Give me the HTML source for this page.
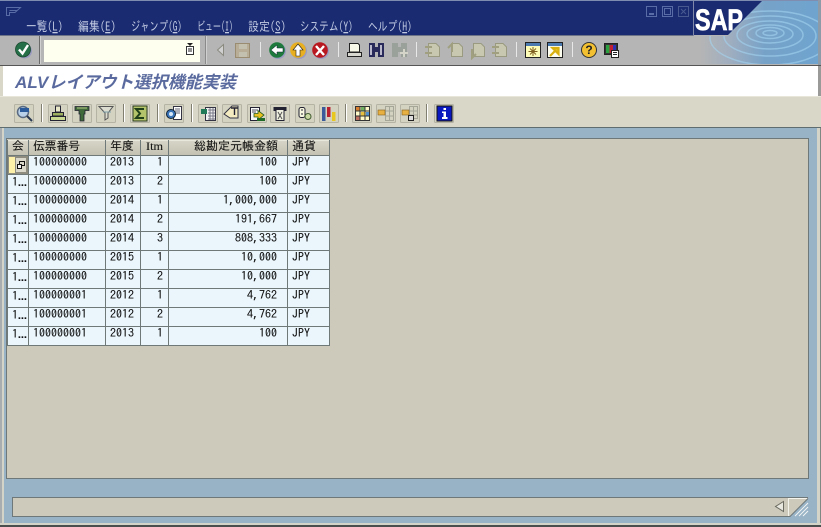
<!DOCTYPE html>
<html lang="ja"><head><meta charset="utf-8"><title>ALVレイアウト選択機能実装</title>
<style>
html,body{margin:0;padding:0;background:#98b3c6;width:821px;height:527px;overflow:hidden}
svg{display:block}
.m{font:13px "IPAGothic","Noto Sans CJK JP",sans-serif;fill:#c2cbe2}
.c{font:12px "IPAGothic","Noto Sans CJK JP",monospace;fill:#111;stroke:#111;stroke-width:.08}
.h{font:12px "IPAGothic","Noto Sans CJK JP",monospace;fill:#111;stroke:#111;stroke-width:.08}
.t{font:italic bold 17px "Liberation Sans","Noto Sans CJK JP",sans-serif;fill:#5a6a9e}
.r{text-anchor:end}
</style></head><body>
<svg width="821" height="527" viewBox="0 0 821 527" xmlns="http://www.w3.org/2000/svg">
<defs>
<linearGradient id="fade" x1="0" x2="1" y1="0" y2="0"><stop offset="0" stop-color="#b5b5b5"/><stop offset=".25" stop-color="#a0aebf"/><stop offset=".55" stop-color="#76a2c8"/><stop offset="1" stop-color="#6fa4cf"/></linearGradient>
<linearGradient id="hd" x1="0" x2="0" y1="0" y2="1"><stop offset="0" stop-color="#d8d6c8"/><stop offset="1" stop-color="#c4c2b2"/></linearGradient>
<clipPath id="logo"><path d="M762 1H818V64H700V36H728Z"/></clipPath>
</defs>
<!-- frame -->
<rect width="821" height="527" fill="#98b3c6"/>
<rect x="0" y="0" width="821" height="1" fill="#7f8db0"/>
<rect x="0" y="1" width="693" height="34" fill="#1a2b72"/>
<rect x="0" y="35" width="821" height="30" fill="#b5b5b5"/>
<rect x="0" y="35" width="693" height="1" fill="#6d7488"/>
<!-- logo area -->
<rect x="700" y="1" width="118" height="63" fill="url(#fade)" clip-path="url(#logo)"/>
<g clip-path="url(#logo)" fill="none" stroke="#a4d4f0" stroke-width="1.500" opacity=".6">
<ellipse cx="770" cy="33" rx="7" ry="2.500"/>
<ellipse cx="770" cy="33" rx="14" ry="5.500"/>
<ellipse cx="770" cy="34" rx="23" ry="9"/>
<ellipse cx="770" cy="35" rx="33" ry="14"/>
<ellipse cx="770" cy="36" rx="46" ry="20"/>
<ellipse cx="770" cy="38" rx="60" ry="27"/>
</g>
<path d="M693 1H762L728 35H693Z" fill="#1a2b72"/>
<rect x="693" y="1" width="1" height="35" fill="#7f88a8"/>
<text x="695" y="30" textLength="48" lengthAdjust="spacingAndGlyphs" style="font:bold 30px 'Liberation Sans',sans-serif;fill:#fff;stroke:#fff;stroke-width:.7">SAP</text>
<rect x="818" y="0" width="3" height="65" fill="#8d9aa8"/>
<!-- title bar -->
<g fill="none" stroke="#5a6ca5" stroke-width="1">
<path d="M6.500 7.500H20.500L15 12.500H9.500V15.500H6.500Z"/><path d="M9.500 10.500H17"/>
<rect x="646.500" y="6.500" width="10" height="10"/><path d="M649 14H654" stroke-width="2"/>
<rect x="662.500" y="6.500" width="10" height="10"/><rect x="664.500" y="8.500" width="6" height="6"/>
<rect x="678.500" y="6.500" width="10" height="10" stroke="#48598f"/><path d="M681 9L686 14M686 9L681 14" stroke="#48598f"/>
</g>
<text class="m" x="26" y="31" textLength="37" lengthAdjust="spacingAndGlyphs">一覧(<tspan text-decoration="underline">L</tspan>)</text>
<text class="m" x="78" y="31" textLength="38" lengthAdjust="spacingAndGlyphs">編集(<tspan text-decoration="underline">E</tspan>)</text>
<text class="m" x="131" y="31" textLength="51" lengthAdjust="spacingAndGlyphs">ジャンプ(<tspan text-decoration="underline">G</tspan>)</text>
<text class="m" x="197" y="31" textLength="36" lengthAdjust="spacingAndGlyphs">ビュー(<tspan text-decoration="underline">I</tspan>)</text>
<text class="m" x="248" y="31" textLength="38" lengthAdjust="spacingAndGlyphs">設定(<tspan text-decoration="underline">S</tspan>)</text>
<text class="m" x="300" y="31" textLength="53" lengthAdjust="spacingAndGlyphs">システム(<tspan text-decoration="underline">Y</tspan>)</text>
<text class="m" x="368" y="31" textLength="44" lengthAdjust="spacingAndGlyphs">ヘルプ(<tspan text-decoration="underline">H</tspan>)</text>
<!-- system toolbar -->
<rect x="39" y="36" width="1" height="28" fill="#6a6a6a"/><rect x="40" y="36" width="1" height="28" fill="#d0d0d0"/>
<rect x="205" y="36" width="1" height="28" fill="#8a8a8a"/><rect x="206" y="36" width="1" height="28" fill="#d0d0d0"/>
<rect x="44" y="40" width="156" height="22" fill="#fffff0"/>
<g fill="#fff" stroke="#333"><rect x="186.500" y="46.500" width="7" height="8"/></g>
<path d="M187 43H193L190 46Z" fill="#222"/><path d="M188 49H192M188 51H192" stroke="#222"/>
<circle cx="24.500" cy="51" r="7.500" fill="#9a9ac0"/><circle cx="23" cy="49.500" r="7.500" fill="#256f48" stroke="#1a4a30" stroke-width=".8"/>
<path d="M19 49.500L22.500 53.500L28 45" fill="none" stroke="#fff" stroke-width="2.400"/>
<path d="M223.500 44.500V55.500L217.500 50Z" fill="#d0d0d0" stroke="#8a8a80"/>
<rect x="235.500" y="43.500" width="14" height="14" fill="#b8ae98" stroke="#9a8c70"/><rect x="239" y="44" width="8" height="5" fill="#c4c0b0"/><rect x="239" y="52" width="8" height="5" fill="#c4c0b0"/>
<g fill="#e8e8e8"><rect x="260" y="42" width="1" height="15"/><rect x="338" y="42" width="1" height="15"/><rect x="416" y="42" width="1" height="15"/><rect x="516" y="42" width="1" height="15"/><rect x="572" y="42" width="1" height="15"/></g>
<circle cx="278" cy="51" r="8" fill="#9a9ac0"/><circle cx="277" cy="50" r="7.800" fill="#1d7a3c"/>
<path d="M271 50L277 45V48H283V52H277V55Z" fill="#fff" stroke="#123" stroke-width=".5"/>
<circle cx="299" cy="51" r="8" fill="#9a9ac0"/><circle cx="298" cy="50" r="7.800" fill="#e8b020"/>
<path d="M298 44L303 50H300V56H296V50H293Z" fill="#fff" stroke="#222" stroke-width=".6"/>
<circle cx="321" cy="51" r="8" fill="#9a9ac0"/><circle cx="320" cy="50" r="7.800" fill="#b81820"/>
<path d="M316 46L324 55M324 46L316 55" stroke="#fff" stroke-width="2.400"/>
<path d="M349.500 43.500H358L359.500 45V52H349.500Z" fill="#f8f8e8" stroke="#222"/><path d="M347.500 52.500H361.500V56.500H347.500Z" fill="#d8d8d0" stroke="#222"/>
<path d="M369 43H375V47H378V43H384V57H378V52H375V57H369Z" fill="#2a2a5a"/><path d="M371 45V55M381 45V55" stroke="#e8e8f0" stroke-width="1.500"/>
<path d="M392 43H398V47H401V43H407V57H401V52H398V57H392Z" fill="#9aa09a"/><path d="M400 53H408M404 49V57" stroke="#d4d4c8" stroke-width="2"/>
<g fill="none" stroke="#9a9a80" stroke-width="1">
<path d="M428.500 43.500H436L439.500 47V56.500H428.500Z" fill="#c8c8b0"/><path d="M425 47H432M425 53H432" stroke-width="2" stroke="#a0a080"/>
<path d="M451.500 43.500H459L462.500 47V56.500H451.500Z" fill="#c8c8b0"/><path d="M452 52V44L448 48" stroke-width="2" stroke="#a0a080"/>
<path d="M473.500 43.500H481L484.500 47V56.500H473.500Z" fill="#c8c8b0"/><path d="M472 49V58L476 54" stroke-width="2" stroke="#a0a080"/>
<path d="M495.500 43.500H503L506.500 47V56.500H495.500Z" fill="#c8c8b0"/><path d="M492 47H499M492 53H499" stroke-width="2" stroke="#a0a080"/>
</g>
<rect x="525.500" y="42.500" width="15" height="15" fill="#fdfdb8" stroke="#222"/><rect x="526" y="43" width="14" height="3" fill="#4a7ab0"/>
<path d="M533 47V56M528.500 51.500H537.500M530 48.500L536 54.500M536 48.500L530 54.500" stroke="#806020"/>
<rect x="547.500" y="42.500" width="15" height="15" fill="#fdfdf0" stroke="#222"/><rect x="548" y="43" width="14" height="3" fill="#4a7ab0"/>
<path d="M550 56L556 50M552.500 48H558.500V54Z" stroke="#d8b010" stroke-width="2.200" fill="#e8c020"/>
<circle cx="589" cy="50" r="7.500" fill="#f2c030" stroke="#333"/>
<text x="589" y="54" text-anchor="middle" style="font:bold 12px 'Liberation Sans',sans-serif;fill:#222">?</text>
<rect x="604.500" y="43.500" width="13" height="11" fill="#333" stroke="#222"/><rect x="606" y="45" width="3.500" height="8" fill="#2aa040"/><rect x="609.500" y="45" width="3.500" height="8" fill="#c02030"/><rect x="613" y="45" width="3" height="8" fill="#3030b0"/>
<rect x="611.500" y="50.500" width="7" height="7" fill="#fff" stroke="#222"/><path d="M613 52.500H617M613 54.500H617" stroke="#222"/>
<!-- separation & title -->
<rect x="0" y="65" width="821" height="1" fill="#555"/>
<rect x="0" y="66" width="821" height="31" fill="#fff"/>
<rect x="0" y="66" width="3" height="31" fill="#d9d8c8"/>
<rect x="818" y="66" width="3" height="31" fill="#9a9a98"/>
<text class="t" x="15" y="88" textLength="221" lengthAdjust="spacingAndGlyphs">ALVレイアウト選択機能実装</text>
<!-- app toolbar -->
<rect x="0" y="97" width="821" height="30" fill="#d9d8c8"/>
<rect x="0" y="96" width="821" height="1" fill="#e8e6d8"/>
<rect x="0" y="127" width="821" height="1" fill="#5f6c70"/>
<g fill="#d4d3c2" stroke="#b4b3a4">
<rect x="14.500" y="104.500" width="19" height="18" rx="1"/>
<rect x="48.500" y="104.500" width="19" height="18" rx="1"/><rect x="72.500" y="104.500" width="19" height="18" rx="1"/><rect x="96.500" y="104.500" width="19" height="18" rx="1"/>
<rect x="130.500" y="104.500" width="19" height="18" rx="1"/><rect x="164.500" y="104.500" width="19" height="18" rx="1"/>
<rect x="198.500" y="104.500" width="19" height="18" rx="1"/><rect x="222.500" y="104.500" width="19" height="18" rx="1"/><rect x="247.500" y="104.500" width="19" height="18" rx="1"/><rect x="270.500" y="104.500" width="19" height="18" rx="1"/><rect x="295.500" y="104.500" width="19" height="18" rx="1"/><rect x="319.500" y="104.500" width="19" height="18" rx="1"/>
<rect x="352.500" y="104.500" width="19" height="18" rx="1"/><rect x="376.500" y="104.500" width="19" height="18" rx="1"/><rect x="400.500" y="104.500" width="19" height="18" rx="1"/>
<rect x="434.500" y="104.500" width="19" height="18" rx="1"/>
</g>
<g fill="#807f70"><rect x="41" y="104" width="1" height="18"/><rect x="123" y="104" width="1" height="18"/><rect x="157" y="104" width="1" height="18"/><rect x="191" y="104" width="1" height="18"/><rect x="345" y="104" width="1" height="18"/><rect x="426" y="104" width="1" height="18"/></g>
<g fill="#fff"><rect x="42" y="104" width="1" height="18"/><rect x="124" y="104" width="1" height="18"/><rect x="158" y="104" width="1" height="18"/><rect x="192" y="104" width="1" height="18"/><rect x="346" y="104" width="1" height="18"/><rect x="427" y="104" width="1" height="18"/></g>
<!-- app icons -->
<circle cx="23" cy="112" r="5.500" fill="#b8d0e8" stroke="#5a6a80" stroke-width="1.500"/><rect x="20" y="108" width="9" height="4" fill="#2a5a9a"/><path d="M27 116L32 121" stroke="#2a3a50" stroke-width="2"/>
<path d="M55.500 106H60.500V112H55.500Z" fill="#e8e8c8" stroke="#223"/><rect x="52.500" y="112.500" width="11" height="3.500" fill="#9db060" stroke="#223"/><rect x="50.500" y="116.500" width="15" height="4" fill="#c8d890" stroke="#223"/>
<path d="M75 106.500H89V110.500H85V114H84V121H80V114H79V110.500H75Z" fill="#406a3a" stroke="#223" stroke-width=".8"/><path d="M77 108H87" stroke="#b8c888"/>
<path d="M99 106.500H113L108 113V118L105 120V113Z" fill="#dcdcd0" stroke="#555"/><path d="M103 112H111" stroke="#80a0a8"/>
<rect x="133" y="106" width="14" height="15" fill="#b4c46a" stroke="#2a3a20"/><path d="M144 109H136L140 113.500L136 118H144" fill="none" stroke="#20401a" stroke-width="2"/>
<rect x="173.500" y="106.500" width="8" height="13" fill="#fff" stroke="#334"/><path d="M175 109H180M175 111H180M175 113H180" stroke="#667"/><circle cx="171" cy="114" r="4.500" fill="#3a74b8" stroke="#123"/><circle cx="171" cy="114" r="2" fill="#d8e8f8"/>
<rect x="205.500" y="107.500" width="10" height="13" fill="#f0f0f0" stroke="#334"/><path d="M208 110H215M208 113H215M208 116H215M208 119H215M210 108V120M213 108V120" stroke="#778"/><rect x="201" y="109" width="6" height="5" fill="#207a58"/>
<path d="M224 114L232 106H238V118H230Z" fill="#f4ecc0" stroke="#334"/><path d="M231 108H238M234.500 108V115" stroke="#223" stroke-width="1.400"/>
<rect x="250.500" y="107.500" width="9" height="13" fill="#f8f8f8" stroke="#223"/><path d="M252 110H258M252 112H256" stroke="#556"/><path d="M254 113.500H258V110.500L264 115L258 120V117H254Z" fill="#e8c020" stroke="#205a20" stroke-width=".8"/>
<rect x="257" y="118" width="8" height="3" fill="#206a28"/>
<path d="M274 107.500H286V110.500H284V120.500H276V110.500H274Z" fill="#f0f0e0" stroke="#223"/><path d="M278 112L282 119M282 112L278 119" stroke="#555"/><rect x="274" y="107" width="12" height="3" fill="#223"/>
<rect x="299" y="107.500" width="6" height="10" rx="2" fill="#f8f8e0" stroke="#223"/><path d="M301 110H303M301 114H303" stroke="#223"/><circle cx="308" cy="116.500" r="3" fill="#c8d8a0" stroke="#405a30"/>
<rect x="322" y="107" width="3.500" height="14" fill="#3a5a9a"/><rect x="327" y="107" width="3.500" height="10" fill="#b82030"/><rect x="332" y="112" width="3.500" height="9" fill="#e8c820"/>
<g fill="#fff8c8" stroke="#333"><rect x="355.500" y="106.500" width="14" height="14"/></g>
<g fill="#d88030"><rect x="356" y="107" width="4" height="4"/></g><g fill="#70b060"><rect x="361" y="107" width="4" height="4"/></g><g fill="#5090d0"><rect x="366" y="112" width="3" height="4"/></g><g fill="#e8c040"><rect x="361" y="112" width="4" height="4"/></g><g fill="#c07060"><rect x="356" y="116" width="4" height="4"/></g>
<path d="M360 107V120M365 107V120M356 111H369M356 116H369" stroke="#333"/>
<g fill="none" stroke="#a5a598"><rect x="385.500" y="106.500" width="8" height="14"/><path d="M389.500 107V120M386 111H393M386 116H393"/><rect x="409.500" y="106.500" width="8" height="12"/><path d="M413.500 107V118M410 111H417M410 115H417"/></g>
<rect x="378" y="110" width="7" height="5" fill="#e8b040" stroke="#806020" stroke-width=".6"/>
<rect x="402" y="110" width="7" height="5" fill="#e8b040" stroke="#806020" stroke-width=".6"/><rect x="408.500" y="115.500" width="5" height="5" fill="#ddd" stroke="#222"/>
<rect x="437" y="106" width="15" height="15" fill="#0a18c0" stroke="#111"/><path d="M443.500 110V108H446V110ZM442 111.500H446V117H447.500V119H442V117H443.500V113H442Z" fill="#fff"/>
<!-- main panel -->
<rect x="0" y="128" width="3" height="399" fill="#a8aeb0"/><rect x="2" y="128" width="2" height="396" fill="#d4d4c8"/>
<rect x="817" y="128" width="4" height="399" fill="#d4d4c8"/><rect x="820" y="128" width="1" height="399" fill="#808884"/>
<rect x="0" y="523" width="821" height="2" fill="#d4d4c8"/><rect x="0" y="525" width="821" height="2" fill="#4a4e4c"/>
<rect x="6.500" y="138.500" width="802" height="340" fill="#cdcabb" stroke="#6e7878"/>
<!-- table -->
<rect x="8" y="155" width="321" height="190" fill="#eaf6fc"/>
<rect x="8" y="140" width="321" height="15" fill="url(#hd)"/>
<g fill="#e8e8dc"><rect x="8" y="140" width="321" height="1"/></g>
<g fill="#6f7a78">
<rect x="7" y="155" width="323" height="1"/><rect x="7" y="174" width="323" height="1"/><rect x="7" y="193" width="323" height="1"/><rect x="7" y="212" width="323" height="1"/><rect x="7" y="231" width="323" height="1"/><rect x="7" y="250" width="323" height="1"/><rect x="7" y="269" width="323" height="1"/><rect x="7" y="288" width="323" height="1"/><rect x="7" y="307" width="323" height="1"/><rect x="7" y="326" width="323" height="1"/><rect x="7" y="345" width="323" height="1"/>
<rect x="7" y="140" width="1" height="205"/><rect x="28" y="140" width="1" height="205"/><rect x="105" y="140" width="1" height="205"/><rect x="140" y="140" width="1" height="205"/><rect x="168" y="140" width="1" height="205"/><rect x="287" y="140" width="1" height="205"/><rect x="329" y="140" width="1" height="205"/>
</g>
<!-- selected cell -->
<rect x="8" y="156" width="20" height="18" fill="#8d8c7e"/><rect x="9" y="157" width="6" height="16" fill="#fdf0a8"/><rect x="16" y="158" width="10" height="14" fill="#dad8ca"/>
<rect x="19.500" y="161.500" width="5" height="4" fill="none" stroke="#111"/><rect x="17.500" y="164.500" width="4" height="4" fill="#eee" stroke="#111"/>
<!-- headers -->
<text class="h" x="12" y="150">会</text><text class="h" x="33" y="150" textLength="47">伝票番号</text><text class="h" x="110" y="150">年度</text><text class="h" x="146" y="150" textLength="17" lengthAdjust="spacingAndGlyphs" style="font-family:'Liberation Serif',serif">Itm</text><text class="h" x="194" y="150" textLength="84">総勘定元帳金額</text><text class="h" x="292" y="150">通貨</text>
<!-- rows -->
<text class="c" x="33" y="166">100000000</text><text class="c" x="110" y="166">2013</text><text class="c r" x="163" y="166">1</text><text class="c r" x="277" y="166">100</text><text class="c" x="292" y="166">JPY</text>
<text class="c" x="12 17.500 20.500 23.500" y="186">1...</text><text class="c" x="33" y="185">100000000</text><text class="c" x="110" y="185">2013</text><text class="c r" x="163" y="185">2</text><text class="c r" x="277" y="185">100</text><text class="c" x="292" y="185">JPY</text>
<text class="c" x="12 17.500 20.500 23.500" y="205">1...</text><text class="c" x="33" y="204">100000000</text><text class="c" x="110" y="204">2014</text><text class="c r" x="163" y="204">1</text><text class="c r" x="277" y="204">1,000,000</text><text class="c" x="292" y="204">JPY</text>
<text class="c" x="12 17.500 20.500 23.500" y="224">1...</text><text class="c" x="33" y="223">100000000</text><text class="c" x="110" y="223">2014</text><text class="c r" x="163" y="223">2</text><text class="c r" x="277" y="223">191,667</text><text class="c" x="292" y="223">JPY</text>
<text class="c" x="12 17.500 20.500 23.500" y="243">1...</text><text class="c" x="33" y="242">100000000</text><text class="c" x="110" y="242">2014</text><text class="c r" x="163" y="242">3</text><text class="c r" x="277" y="242">808,333</text><text class="c" x="292" y="242">JPY</text>
<text class="c" x="12 17.500 20.500 23.500" y="262">1...</text><text class="c" x="33" y="261">100000000</text><text class="c" x="110" y="261">2015</text><text class="c r" x="163" y="261">1</text><text class="c r" x="277" y="261">10,000</text><text class="c" x="292" y="261">JPY</text>
<text class="c" x="12 17.500 20.500 23.500" y="281">1...</text><text class="c" x="33" y="280">100000000</text><text class="c" x="110" y="280">2015</text><text class="c r" x="163" y="280">2</text><text class="c r" x="277" y="280">10,000</text><text class="c" x="292" y="280">JPY</text>
<text class="c" x="12 17.500 20.500 23.500" y="300">1...</text><text class="c" x="33" y="299">100000001</text><text class="c" x="110" y="299">2012</text><text class="c r" x="163" y="299">1</text><text class="c r" x="277" y="299">4,762</text><text class="c" x="292" y="299">JPY</text>
<text class="c" x="12 17.500 20.500 23.500" y="319">1...</text><text class="c" x="33" y="318">100000001</text><text class="c" x="110" y="318">2012</text><text class="c r" x="163" y="318">2</text><text class="c r" x="277" y="318">4,762</text><text class="c" x="292" y="318">JPY</text>
<text class="c" x="12 17.500 20.500 23.500" y="338">1...</text><text class="c" x="33" y="337">100000001</text><text class="c" x="110" y="337">2013</text><text class="c r" x="163" y="337">1</text><text class="c r" x="277" y="337">100</text><text class="c" x="292" y="337">JPY</text>
<!-- status bar -->
<rect x="12.500" y="497.500" width="776" height="19" fill="#cdcabb" stroke="#6e7878"/>
<rect x="788" y="497" width="20" height="1" fill="#6e7878"/>
<path d="M783.500 501.500V511.500L775.500 506.500Z" fill="#e8e8e0" stroke="#6a6a60"/>
<path d="M788 498H808L790 516H788Z" fill="#cdcabb"/>
<path d="M788.500 516V498.500H807" fill="none" stroke="#f4f4ec"/>
<path d="M788 516.500H790L808 498.500" fill="none" stroke="#6e7878"/>
<path d="M795 516L808 503M799 516L808 507M803 516L808 511" stroke="#f2f4f4" stroke-width="1" fill="none"/>
</svg>
</body></html>
